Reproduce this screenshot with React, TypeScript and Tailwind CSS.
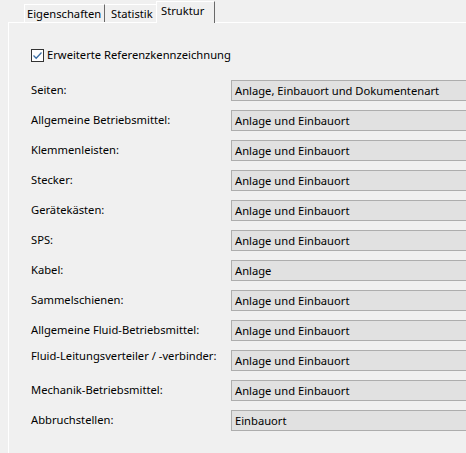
export default function App() {
  const rows: [string, string][] = [
    ["Seiten:", "Anlage, Einbauort und Dokumentenart"],
    ["Allgemeine Betriebsmittel:", "Anlage und Einbauort"],
    ["Klemmenleisten:", "Anlage und Einbauort"],
    ["Stecker:", "Anlage und Einbauort"],
    ["Gerätekästen:", "Anlage und Einbauort"],
    ["SPS:", "Anlage und Einbauort"],
    ["Kabel:", "Anlage"],
    ["Sammelschienen:", "Anlage und Einbauort"],
    ["Allgemeine Fluid-Betriebsmittel:", "Anlage und Einbauort"],
    ["Fluid-Leitungsverteiler / -verbinder:", "Anlage und Einbauort"],
    ["Mechanik-Betriebsmittel:", "Anlage und Einbauort"],
    ["Abbruchstellen:", "Einbauort"],
  ]

  return (
    <div
      className="w-[466px] h-[453px] bg-[#f0f0f0] overflow-hidden text-[11.2px] text-black"
      style={{ fontFamily: '"Noto Sans", "Open Sans", sans-serif' }}
    >
      {/* Reiter */}
      <div className="flex items-end h-[22px] pl-[24px]">
        <div className="h-[18px] w-[81px] px-[2px] border-l border-t border-white border-r border-r-[#696969] leading-[18px]">
          Eigenschaften
        </div>
        <div className="h-[18px] w-[51px] px-[6px] border-t border-white leading-[18px]">Statistik</div>
        <div className="h-[22px] w-[59px] px-[4px] bg-[#f0f0f0] border-l border-t border-white border-r border-r-[#696969] leading-[18px] -mb-px relative z-10">
          Struktur
        </div>
      </div>

      {/* Seite */}
      <div className="ml-[8px] h-[440px] border-l border-t border-white pl-[22px] pt-[24px]">
        <label className="flex items-center gap-[3px] h-[16px]">
          <span className="w-[13px] h-[13px] border border-[#333] bg-white flex items-center justify-center">
            <svg width="11" height="11" viewBox="0 0 11 11">
              <path d="M1.5 5.5 L4.2 8.2 L9.5 2.5" stroke="#3b6ea5" strokeWidth="1.3" fill="none" />
            </svg>
          </span>
          <span>Erweiterte Referenzkennzeichnung</span>
        </label>

        <div className="mt-[16px] flex flex-col gap-[8px]">
          {rows.map(([label, value], i) => (
            <div key={i} className="flex items-center h-[22px]">
              <div className={"w-[200px] " + (i === 9 ? "-mt-[8px]" : "")}>{label}</div>
              <div className="flex-1 h-[21px] bg-[#e1e1e1] border border-[#adadad] border-r-0 pl-[3px] leading-[19px] whitespace-nowrap">
                {value}
              </div>
            </div>
          ))}
        </div>
      </div>
    </div>
  )
}
